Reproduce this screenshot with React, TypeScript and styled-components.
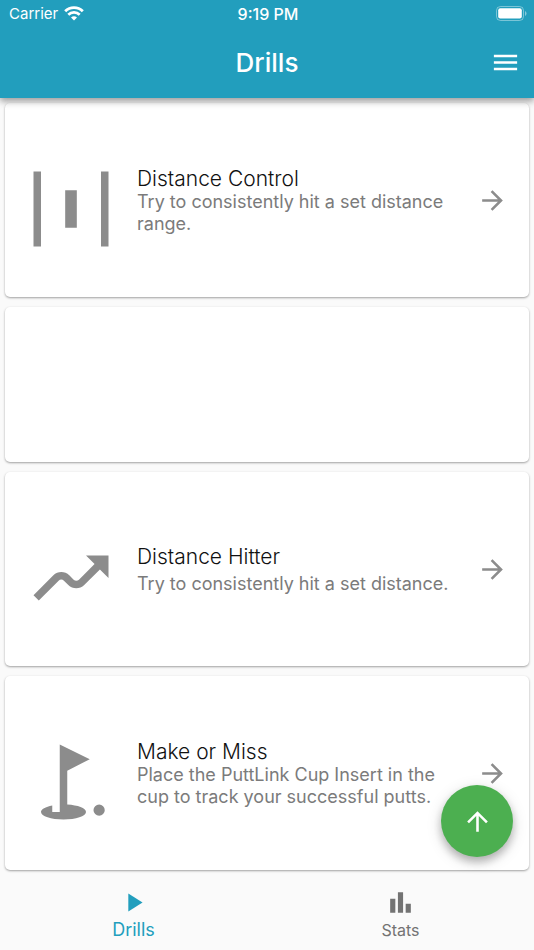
import React from "react";
import styled, { createGlobalStyle } from "styled-components";

const teal = "#229ebd";

const GlobalStyle = createGlobalStyle`
  *, *::before, *::after { box-sizing: border-box; }
  body {
    margin: 0;
    background: #fafafa;
    font-family: Inter, "Liberation Sans", sans-serif;
  }
  button { font-family: inherit; }
`;

const Screen = styled.div`
  display: flex;
  flex-direction: column;
  height: 100vh;
`;

const Header = styled.header`
  position: relative;
  z-index: 1;
  flex: none;
  background: ${teal};
  color: #fff;
  box-shadow: 0 3px 6px rgba(0, 0, 0, 0.26), 0 4px 8px rgba(0, 0, 0, 0.14);
`;

const StatusBar = styled.div`
  display: grid;
  grid-template-columns: 1fr auto 1fr;
  align-items: center;
  height: 27px;
  padding: 0 7px 0 9px;
  font-size: 15px;
  line-height: 20px;
`;

const Carrier = styled.span`
  display: flex;
  align-items: center;
  gap: 6px;
`;

const Clock = styled.time`
  font-size: 16px;
  font-weight: 500;
`;

const BatterySlot = styled.span`
  display: flex;
  justify-content: flex-end;
`;

const TitleBar = styled.div`
  display: grid;
  grid-template-columns: 1fr auto 1fr;
  align-items: center;
  height: 71px;
  padding: 0 13px;
`;

const PageTitle = styled.h1`
  grid-column: 2;
  margin: 0;
  font-size: 26px;
  line-height: 32px;
  font-weight: 500;
`;

const IconButton = styled.button`
  display: flex;
  justify-self: end;
  padding: 0;
  border: 0;
  background: none;
  color: inherit;
  cursor: pointer;
`;

const DrillList = styled.main`
  display: flex;
  flex: 1;
  flex-direction: column;
  gap: 10px;
  min-height: 0;
  padding: 5px;
  overflow-y: auto;
`;

const Card = styled.article<{ $empty?: boolean }>`
  display: flex;
  flex: none;
  align-items: center;
  min-height: ${(p) => (p.$empty ? 155 : 194)}px;
  padding: 0 21px;
  border-radius: 5px;
  background: #fff;
  box-shadow: 0 1px 2px rgba(0, 0, 0, 0.26), 0 1px 3px rgba(0, 0, 0, 0.12);
`;

const Leading = styled.div`
  display: flex;
  flex: none;
  margin-right: 21px;
  padding-top: 18px;
  color: #8c8c8c;
`;

const CardText = styled.div<{ $gap: number }>`
  display: flex;
  flex: 1;
  flex-direction: column;
  gap: ${(p) => p.$gap}px;
  min-width: 0;
  padding-top: 2px;
`;

const CardTitle = styled.h2`
  margin: 0;
  color: #111;
  font-size: 21px;
  line-height: 24px;
  font-weight: 300;
`;

const CardDescription = styled.p`
  margin: 0;
  color: #7b7b7b;
  font-size: 18px;
  line-height: 22px;
`;

const OpenButton = styled(IconButton)`
  flex: none;
  margin-left: 12px;
  color: #8c8c8c;
`;

const TabBar = styled.nav`
  display: flex;
  flex: none;
  height: 75px;
  background: #fafafa;
`;

const Tab = styled.button<{ $active?: boolean }>`
  display: flex;
  flex: 1;
  flex-direction: column;
  align-items: center;
  padding: 12px 0 0;
  border: 0;
  background: none;
  color: ${(p) => (p.$active ? teal : "#737373")};
  font-size: ${(p) => (p.$active ? 18 : 16)}px;
  line-height: 24px;
  cursor: pointer;
`;

const UploadButton = styled.button`
  position: fixed;
  z-index: 2;
  right: 21px;
  bottom: 93px;
  display: flex;
  align-items: center;
  justify-content: center;
  width: 72px;
  height: 72px;
  padding: 0;
  border: 0;
  border-radius: 50%;
  background: #4caf50;
  color: #fff;
  box-shadow: 0 5px 8px rgba(0, 0, 0, 0.24), 0 4px 16px rgba(0, 0, 0, 0.14);
  cursor: pointer;
`;

const icons = {
  menu: "M3 18h18v-2H3v2zm0-5h18v-2H3v2zm0-7v2h18V6H3z",
  forward: "M12 4l-1.41 1.41L16.17 11H4v2h12.17l-5.58 5.59L12 20l8-8z",
  up: "M4 12l1.41 1.41L11 7.83V20h2V7.83l5.58 5.59L20 12l-8-8-8 8z",
  play: "M8 5v14l11-7z",
  bars: "M4 9h4v11H4zM16 13h4v7h-4zM10 4h4v16h-4z",
  range: "M2 2h2v20H2zM20 2h2v20h-2zM10.45 7h3.1v10h-3.1z",
  moving:
    "M19.71 9.71L22 12V6h-6l2.29 2.29-4.17 4.17c-.39.39-1.02.39-1.41 0l-1.17-1.17c-1.17-1.17-3.07-1.17-4.24 0L2 16.59 3.41 18l5.29-5.29c.39-.39 1.02-.39 1.41 0l1.17 1.17c1.17 1.17 3.07 1.17 4.24 0l4.19-4.17z",
  golf: "M17 5.92L9 2v18H7v-1.73c-1.79.35-3 .99-3 1.73 0 1.1 2.69 2 6 2s6-.9 6-2c0-.99-2.16-1.81-5-1.97V8.98l6-3.06zM21 19.5a1.5 1.5 0 1 1-3 0 1.5 1.5 0 0 1 3 0z",
};

type IconName = keyof typeof icons;

function Icon({ name, size = 31 }: { name: IconName; size?: number }) {
  return (
    <svg width={size} height={size} viewBox="0 0 24 24" fill="currentColor" aria-hidden="true">
      <path d={icons[name]} />
    </svg>
  );
}

function Wifi() {
  return (
    <svg width="20" height="15" viewBox="0 0 20 15" fill="none" stroke="#fff" aria-hidden="true">
      <path d="M1.2 5.2a12.6 12.6 0 0 1 17.6 0" strokeWidth="2.9" />
      <path d="M4.3 8.8a8 8 0 0 1 11.4 0" strokeWidth="2.7" />
      <path d="M10 14.6l-3-3a4.3 4.3 0 0 1 6 0z" fill="#fff" stroke="none" />
    </svg>
  );
}

function Battery() {
  return (
    <svg width="31" height="15" viewBox="0 0 31 15" aria-hidden="true">
      <rect x="0.5" y="0.5" width="27" height="14" rx="4" fill="none" stroke="#fff" strokeOpacity="0.4" />
      <rect x="2.2" y="2.3" width="23.6" height="10.2" rx="2" fill="#fff" />
      <path d="M29 5v5a2.8 2.8 0 0 0 0-5z" fill="#fff" fillOpacity="0.45" />
    </svg>
  );
}

interface Drill {
  icon: IconName;
  title: string;
  description: string;
  gap: number;
}

const drills: (Drill | null)[] = [
  {
    icon: "range",
    title: "Distance Control",
    description: "Try to consistently hit a set distance range.",
    gap: 0,
  },
  null,
  {
    icon: "moving",
    title: "Distance Hitter",
    description: "Try to consistently hit a set distance.",
    gap: 4,
  },
  {
    icon: "golf",
    title: "Make or Miss",
    description: "Place the PuttLink Cup Insert in the cup to track your successful putts.",
    gap: 0,
  },
];

export default function App() {
  return (
    <Screen>
      <GlobalStyle />
      <Header>
        <StatusBar>
          <Carrier>
            Carrier
            <Wifi />
          </Carrier>
          <Clock>9:19 PM</Clock>
          <BatterySlot>
            <Battery />
          </BatterySlot>
        </StatusBar>
        <TitleBar>
          <PageTitle>Drills</PageTitle>
          <IconButton type="button" aria-label="Menu">
            <Icon name="menu" />
          </IconButton>
        </TitleBar>
      </Header>
      <DrillList>
        {drills.map((drill, index) =>
          drill ? (
            <Card key={index}>
              <Leading>
                <Icon name={drill.icon} size={90} />
              </Leading>
              <CardText $gap={drill.gap}>
                <CardTitle>{drill.title}</CardTitle>
                <CardDescription>{drill.description}</CardDescription>
              </CardText>
              <OpenButton type="button" aria-label={`Open ${drill.title}`}>
                <Icon name="forward" />
              </OpenButton>
            </Card>
          ) : (
            <Card key={index} $empty />
          )
        )}
      </DrillList>
      <TabBar>
        <Tab type="button" $active aria-current="page">
          <Icon name="play" />
          Drills
        </Tab>
        <Tab type="button">
          <Icon name="bars" />
          Stats
        </Tab>
      </TabBar>
      <UploadButton type="button" aria-label="Upload">
        <Icon name="up" />
      </UploadButton>
    </Screen>
  );
}
